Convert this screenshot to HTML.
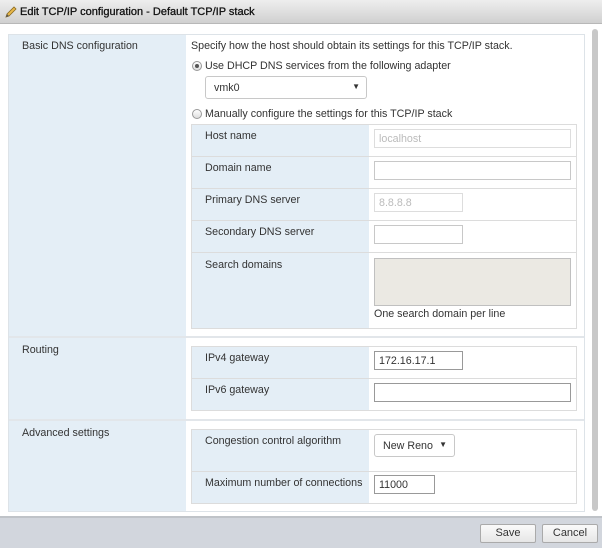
<!DOCTYPE html>
<html><head><meta charset="utf-8"><style>
*{box-sizing:border-box;margin:0;padding:0}
body{width:602px;height:548px;overflow:hidden;background:#fff;font-family:"Liberation Sans",Arial,sans-serif;font-size:10.7px;color:#333;position:relative}
.a{position:absolute}
.title{left:0;top:0;width:602px;height:24px;background:linear-gradient(#eeeeee,#d0d0d0);border-bottom:1px solid #b8b8b8;font-size:11px;color:#111}
.blue{background:#e4eef6}
.inp{position:absolute;border:1px solid #c8c8c8;background:#fff;height:19px;padding:3px 4px;color:#333}
.dis{color:#bbb;border-color:#ddd}
.sep{position:absolute;height:2px;background:#e2e6ea}
.ibox{position:absolute;border:1px solid #dcdcdc;background:#fff}
.lbl{position:absolute;color:#333}
.btn{position:absolute;height:19px;border:1px solid #aaa;border-radius:2px;background:linear-gradient(#fafafa,#e6e6e6);text-align:center;line-height:17px;font-size:11px;color:#333}
.radio{position:absolute;width:10px;height:10px;border-radius:50%;border:1px solid #999;background:linear-gradient(#fff,#ddd)}
</style></head><body>
<div class="a title">
<svg class="a" style="left:4px;top:5px" width="14" height="14" viewBox="0 0 14 14"><path d="M2 12 L3 9 L10 2 L12 4 L5 11 Z" fill="#e8b84a" stroke="#8a6a20" stroke-width="0.8"/><path d="M2 12 L3 9 L5 11 Z" fill="#555"/></svg>
<span class="a" style="left:20px;top:6px;-webkit-text-stroke:0.3px #111">Edit TCP/IP configuration - Default TCP/IP stack</span>
</div>
<div class="a" style="left:592px;top:29px;width:6px;height:482px;background:#c8c8c8;border-radius:3px"></div>
<div class="a" style="left:8px;top:34px;width:577px;height:478px;border:1px solid #dde3e8;background:#fff"></div>
<div class="a blue" style="left:9px;top:35px;width:177px;height:476px"></div>
<div class="sep" style="left:9px;top:336px;width:575px"></div>
<div class="sep" style="left:9px;top:419px;width:575px"></div>
<div class="lbl" style="left:22px;top:40px">Basic DNS configuration</div>
<div class="lbl" style="left:22px;top:344px">Routing</div>
<div class="lbl" style="left:22px;top:427px">Advanced settings</div>
<div class="lbl" style="left:191px;top:40px">Specify how the host should obtain its settings for this TCP/IP stack.</div>
<div class="radio" style="left:192px;top:61px"><div style="position:absolute;left:2px;top:2px;width:4px;height:4px;border-radius:50%;background:#555"></div></div>
<div class="lbl" style="left:205px;top:60px">Use DHCP DNS services from the following adapter</div>
<div class="inp" style="left:205px;top:76px;width:162px;height:23px;border-radius:3px;padding:5px 8px">vmk0<span style="position:absolute;right:6px;top:5px;font-size:8px">▼</span></div>
<div class="radio" style="left:192px;top:109px"></div>
<div class="lbl" style="left:205px;top:108px">Manually configure the settings for this TCP/IP stack</div>
<div class="ibox" style="left:191px;top:124px;width:386px;height:205px"></div>
<div class="a blue" style="left:192px;top:125px;width:177px;height:203px"></div>
<div class="sep" style="left:192px;top:156px;width:384px;height:1px;background:#dcdcdc"></div>
<div class="sep" style="left:192px;top:188px;width:384px;height:1px;background:#dcdcdc"></div>
<div class="sep" style="left:192px;top:220px;width:384px;height:1px;background:#dcdcdc"></div>
<div class="sep" style="left:192px;top:252px;width:384px;height:1px;background:#dcdcdc"></div>
<div class="lbl" style="left:205px;top:130px">Host name</div>
<div class="lbl" style="left:205px;top:162px">Domain name</div>
<div class="lbl" style="left:205px;top:194px">Primary DNS server</div>
<div class="lbl" style="left:205px;top:226px">Secondary DNS server</div>
<div class="lbl" style="left:205px;top:259px">Search domains</div>
<div class="inp dis" style="left:374px;top:129px;width:197px">localhost</div>
<div class="inp" style="left:374px;top:161px;width:197px"></div>
<div class="inp dis" style="left:374px;top:193px;width:89px">8.8.8.8</div>
<div class="inp" style="left:374px;top:225px;width:89px"></div>
<div class="inp" style="left:374px;top:258px;width:197px;height:48px;background:#ebe9e3;border-color:#c0c0c0"></div>
<div class="lbl" style="left:374px;top:308px">One search domain per line</div>
<div class="ibox" style="left:191px;top:346px;width:386px;height:65px"></div>
<div class="a blue" style="left:192px;top:347px;width:177px;height:63px"></div>
<div class="sep" style="left:192px;top:378px;width:384px;height:1px;background:#dcdcdc"></div>
<div class="lbl" style="left:205px;top:352px">IPv4 gateway</div>
<div class="lbl" style="left:205px;top:384px">IPv6 gateway</div>
<div class="inp" style="left:374px;top:351px;width:89px;border-color:#999">172.16.17.1</div>
<div class="inp" style="left:374px;top:383px;width:197px;border-color:#999"></div>
<div class="ibox" style="left:191px;top:429px;width:386px;height:75px"></div>
<div class="a blue" style="left:192px;top:430px;width:177px;height:73px"></div>
<div class="sep" style="left:192px;top:471px;width:384px;height:1px;background:#dcdcdc"></div>
<div class="lbl" style="left:205px;top:435px">Congestion control algorithm</div>
<div class="lbl" style="left:205px;top:477px">Maximum number of connections</div>
<div class="inp" style="left:374px;top:434px;width:81px;height:23px;border-radius:3px;padding:5px 8px">New Reno<span style="position:absolute;right:7px;top:5px;font-size:8px">▼</span></div>
<div class="inp" style="left:374px;top:475px;width:61px;border-color:#999">11000</div>
<div class="a" style="left:0;top:516px;width:602px;height:2px;background:#bfc3c8"></div>
<div class="a" style="left:0;top:518px;width:602px;height:30px;background:#d2d6dd"></div>
<div class="btn" style="left:480px;top:524px;width:56px">Save</div>
<div class="btn" style="left:542px;top:524px;width:56px">Cancel</div>
</body></html>
